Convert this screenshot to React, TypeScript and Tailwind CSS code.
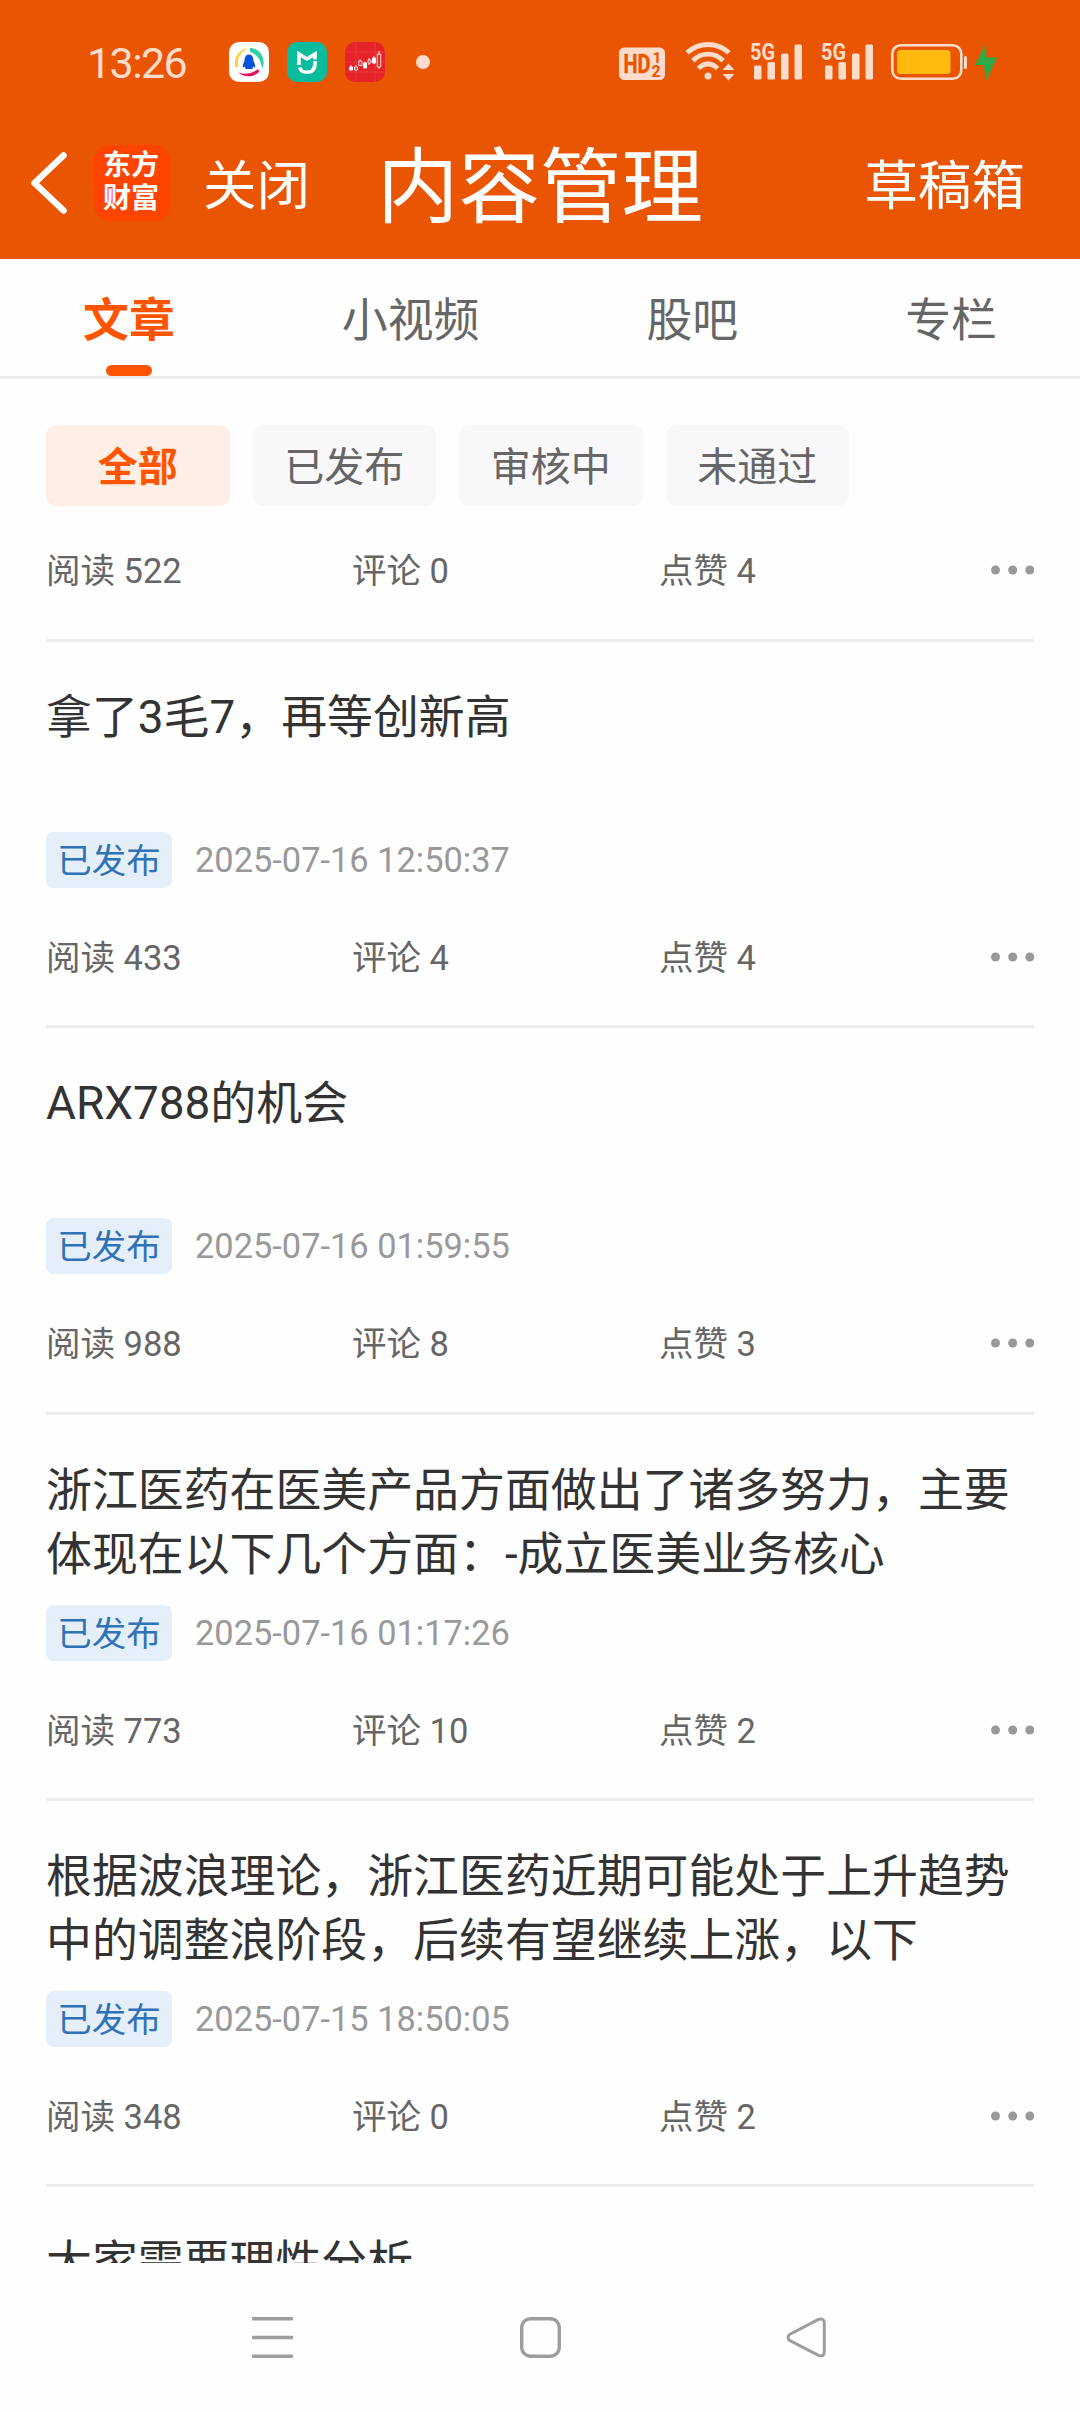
import React from "react";

const PALE = "#fddccb";

type Stats = { reads: number; comments: number; likes: number };
type Article = Stats & { title: string; date: string };

const articles: Article[] = [
  { title: "拿了3毛7，再等创新高", date: "2025-07-16 12:50:37", reads: 433, comments: 4, likes: 4 },
  { title: "ARX788的机会", date: "2025-07-16 01:59:55", reads: 988, comments: 8, likes: 3 },
  {
    title: "浙江医药在医美产品方面做出了诸多努力，主要体现在以下几个方面：-成立医美业务核心",
    date: "2025-07-16 01:17:26",
    reads: 773,
    comments: 10,
    likes: 2,
  },
  {
    title: "根据波浪理论，浙江医药近期可能处于上升趋势中的调整浪阶段，后续有望继续上涨，以下",
    date: "2025-07-15 18:50:05",
    reads: 348,
    comments: 0,
    likes: 2,
  },
];

function Signal() {
  return (
    <svg className="h-[40px] w-[54px] shrink-0 overflow-visible" viewBox="0 0 54 40" fill={PALE}>
      <text x="0" y="18" fontSize="24.500" fontWeight="700" fontFamily="Roboto, sans-serif" textLength="25" lengthAdjust="spacingAndGlyphs">
        5G
      </text>
      <rect x="4" y="23.500" width="7.500" height="14" rx="1.500" />
      <rect x="17.500" y="20" width="7.500" height="17.500" rx="1.500" />
      <rect x="31" y="11.500" width="7.500" height="26" rx="1.500" />
      <rect x="44.500" y="2.500" width="7.500" height="35" rx="1.500" />
    </svg>
  );
}

function StatusBar() {
  return (
    <div className="flex h-[112px] items-start pt-[42px]">
      <span className="ml-[87px] w-[142px] text-[43px] leading-[42px] tracking-[-1.6px] text-[#fddccb]">13:26</span>
      <svg className="h-[40px] w-[40px]" viewBox="0 0 40 40">
        <rect width="40" height="40" rx="10" fill="#fff" />
        <path d="M19 6C10 7 4 16 6.500 25L9.500 25C7.500 17 11 10 19 6Z" fill="#f8d43c" />
        <path d="M21.500 6.500C31 7 36 16 33.500 25.500C32 17 28 12 21.500 9.500Z" fill="#2fcfa5" stroke="#2fcfa5" strokeLinejoin="round" />
        <path d="M8.500 30C14 33 22 32 28.500 27.500C30.500 27.500 30.500 30 29 31C23 36 14 35 8.500 30Z" fill="#e6125f" />
        <path d="M20 12.500C16.500 12.500 15.500 16 15.500 19C14 22 13 25 14.500 25.500L16 24.500L16.500 27H23.500L24 24.500L25.500 25.500C27 25 26 22 24.500 19C24.500 16 23.500 12.500 20 12.500Z" fill="#0655d8" />
      </svg>
      <svg className="ml-[18px] h-[40px] w-[40px]" viewBox="0 0 40 40" fill="none" stroke="#fff" strokeWidth="3.600">
        <rect width="40" height="40" rx="10" fill="#0abb9c" stroke="none" />
        <path d="M12 23V12L20 17L28 12V17.500" />
        <path d="M28 19V21C28 27 25 30.200 20 30.200C16.500 30.200 13.800 28.800 12.600 25.500" />
      </svg>
      <svg className="ml-[18px] h-[40px] w-[40px]" viewBox="0 0 40 40" fill="none" stroke="#ffe3e0" strokeWidth="1">
        <rect width="40" height="40" rx="10" fill="#e62329" stroke="none" />
        <path d="M0 10H40M0 20H40M0 30H40M11 0V40M30 0V40" stroke="#f04a4a" strokeWidth=".6" />
        <path d="M6 23V28M11 23V29M15 17V24M20 20V26M24 16V23M29 14V22M34 9V27" />
        <path d="M4.500 25H7.500V28H4.500ZM18.500 21H21.500V26H18.500ZM27.500 16H30.500V21H27.500Z" fill="#fff" stroke="#fff" />
        <path d="M9.500 25H12.500V28H9.500ZM13.800 19H16.800V23.500H13.800ZM23 18H26V21H23ZM32.300 12H35.700V25H32.300Z" fill="#e62329" />
      </svg>
      <span className="ml-[31px] mt-[13px] h-[14px] w-[14px] rounded-full bg-[#fddccb]" />

      <svg className="ml-[189px] h-[40px] w-[46px]" viewBox="0 0 46 40">
        <rect y="5.500" width="46" height="32.500" rx="5.500" fill={PALE} />
        <g fill="#e95502" fontFamily="Roboto, sans-serif" fontWeight="700">
          <text x="4.500" y="31" fontSize="26" textLength="27" lengthAdjust="spacingAndGlyphs" stroke="#e95502" strokeWidth=".5">HD</text>
          <text x="33.500" y="21" fontSize="15.500">1</text>
          <text x="32.500" y="34.500" fontSize="16">2</text>
        </g>
      </svg>
      <svg className="ml-[20px] h-[40px] w-[50px]" viewBox="0 0 50 40" fill="none" stroke={PALE} strokeWidth="4.800">
        <path d="M2 10.800C14 -.300 32 -.300 44 10.800" />
        <path d="M7.800 18.800C16.500 10 29.500 10 38.200 18.800" />
        <path d="M13.500 26.500C19 20.500 27 20.500 32.500 26.500" />
        <circle cx="23" cy="34" r="3.500" fill={PALE} stroke="none" />
        <path d="M37.500 28L43.500 21.500L49.500 28ZM37.500 32H49.500L43.500 38.500Z" fill={PALE} stroke="none" />
      </svg>
      <div className="ml-[15px] flex gap-[17px]">
        <Signal />
        <Signal />
      </div>
      <svg className="ml-[16px] h-[40px] w-[77px]" viewBox="0 0 77 40">
        <rect x="1.300" y="3.300" width="69" height="33.500" rx="8.500" fill="none" stroke={PALE} strokeWidth="2.600" />
        <rect x="6" y="8" width="53.500" height="24" rx="3.500" fill="#ffb90f" />
        <rect x="73" y="14" width="3" height="13" rx="1.500" fill={PALE} />
      </svg>
      <svg className="ml-[7px] h-[40px] w-[22px]" viewBox="0 0 22 40">
        <path d="M10.500 2.500L0 23H8.500L11.500 38L22 15.500H11.500Z" fill="#2eaa4b" />
      </svg>
    </div>
  );
}

function NavHeader() {
  return (
    <div className="flex h-[142px] items-center text-white">
      <svg className="ml-[30px] h-[62px] w-[37px]" viewBox="0 0 37 62" fill="none" stroke="#fff" strokeWidth="6.500">
        <path d="M33.500 3.500L4.500 31L33.500 58.500" strokeLinejoin="round" strokeLinecap="round" />
      </svg>
      <div className="ml-[27px] flex h-[76px] w-[76px] flex-col items-center justify-center rounded-[16px] bg-[#ff4400] pb-[2px] pr-[2px] text-[28px] font-bold leading-[33px]">
        <span>东方</span>
        <span>财富</span>
      </div>
      <span className="ml-[33px] w-[174px] pt-[8px] text-[53.500px] leading-[70px]">关闭</span>
      <h1 className="w-[326px] whitespace-nowrap pt-[10px] text-[81.500px] leading-[100px]">内容管理</h1>
      <span className="ml-auto mr-[55px] pt-[8px] text-[53.500px] leading-[70px]">草稿箱</span>
    </div>
  );
}

function StatsRow({ reads, comments, likes }: Stats) {
  return (
    <div className="flex h-[50px] items-center text-[34.500px] leading-[50px] text-[#666]">
      <span className="w-[306px] pt-[2px]">阅读 {reads}</span>
      <span className="w-[307px] pt-[2px]">评论 {comments}</span>
      <span className="pt-[2px]">点赞 {likes}</span>
      <svg className="ml-auto h-[10px] w-[44px]" viewBox="0 0 44 10" fill="#999">
        <circle cx="5.500" cy="5" r="4.500" />
        <circle cx="22.700" cy="5" r="4.500" />
        <circle cx="39.800" cy="5" r="4.500" />
      </svg>
    </div>
  );
}

function ArticleItem({ title, date, ...stats }: Article) {
  return (
    <article className="h-[386.250px] shrink-0 border-b-[3px] border-[#eee] pt-[43px]">
      <h2 className="h-[128px] text-[45.900px] leading-[64px] text-[#333]">{title}</h2>
      <div className="mb-[44px] mt-[19px] flex h-[56px] items-center">
        <span className="flex h-[56px] w-[126px] items-center justify-center rounded-[8px] bg-[#e5effa] pt-[4px] text-[34.500px] text-[#3072b8]">
          已发布
        </span>
        <span className="ml-[23px] text-[34.400px] leading-[50px] text-[#999]">{date}</span>
      </div>
      <StatsRow {...stats} />
    </article>
  );
}

function Chip({ label, active }: { label: string; active?: boolean }) {
  return (
    <span
      className={
        active
          ? "flex h-[81px] w-[183.500px] items-center justify-center rounded-[11px] bg-[#ffeee6] pt-[5px] text-[40px] font-bold text-[#ff5500]"
          : "flex h-[81px] w-[183.500px] items-center justify-center rounded-[11px] bg-[#f8f8fb] pt-[5px] text-[40px] text-[#666]"
      }
    >
      {label}
    </span>
  );
}

export default function App() {
  return (
    <div className="flex h-[2412px] w-[1080px] flex-col overflow-hidden bg-[#fefefe] font-[Roboto,'Noto_Sans_CJK_SC',sans-serif]">
      <header className="h-[259px] shrink-0 bg-[#e95502]">
        <StatusBar />
        <NavHeader />
      </header>

      <nav className="flex h-[120px] shrink-0 justify-between border-b-[3px] border-[#eee] px-[83px] text-[45.900px] leading-[64px] text-[#666]">
        <div className="flex flex-col items-center pt-[29px] font-bold text-[#ff5500]">
          <span>文章</span>
          <span className="mt-[13px] h-[11px] w-[46px] rounded-full bg-[#ff5500]" />
        </div>
        <span className="pt-[29px]">小视频</span>
        <span className="pt-[29px]">股吧</span>
        <span className="pt-[29px]">专栏</span>
      </nav>

      <main className="flex min-h-0 flex-1 flex-col overflow-hidden px-[46px]">
        <div className="mt-[46px] flex shrink-0 gap-[23px]">
          <Chip label="全部" active />
          <Chip label="已发布" />
          <Chip label="审核中" />
          <Chip label="未通过" />
        </div>
        <div className="mt-[39px] h-[97px] shrink-0 border-b-[3px] border-[#eee]">
          <StatsRow reads={522} comments={0} likes={4} />
        </div>
        {articles.map((a) => (
          <ArticleItem key={a.date} {...a} />
        ))}
        <h2 className="mt-[43px] shrink-0 text-[45.900px] leading-[64px] text-[#333]">大家需要理性分析</h2>
      </main>

      <footer className="flex h-[149px] shrink-0 items-start pt-[54px]">
        <svg className="ml-[252px] h-[41px] w-[41px]" viewBox="0 0 41 41" fill="#9d9d9d">
          <rect width="41" height="3.600" rx="1" />
          <rect y="18.700" width="41" height="3.600" rx="1" />
          <rect y="37.400" width="41" height="3.600" rx="1" />
        </svg>
        <svg className="ml-[227px] h-[41px] w-[41px]" viewBox="0 0 41 41" fill="none" stroke="#9d9d9d" strokeWidth="3.400">
          <rect x="1.700" y="1.700" width="37.600" height="37.600" rx="9" />
        </svg>
        <svg className="ml-[225px] h-[41px] w-[40px]" viewBox="0 0 40 41" fill="none" stroke="#9d9d9d" strokeWidth="3">
          <path d="M3.500 17.500L32.500 2.400Q38.300 1 38.300 6V35Q38.300 40 32.500 38.400L3.500 23.300Q.500 20.400 3.500 17.500Z" strokeLinejoin="round" />
        </svg>
      </footer>
    </div>
  );
}
